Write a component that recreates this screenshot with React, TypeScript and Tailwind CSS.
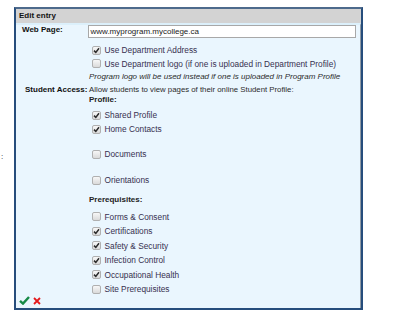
import React from 'react';

const profile = [
  { label: 'Shared Profile', checked: true, space: 'mt-[4px]' },
  { label: 'Home Contacts', checked: true, space: '' },
  { label: 'Documents', checked: false, space: 'mt-[11px]' },
  { label: 'Orientations', checked: false, space: 'mt-[12px]' },
];

const prerequisites = [
  { label: 'Forms & Consent', checked: false },
  { label: 'Certifications', checked: true },
  { label: 'Safety & Security', checked: true },
  { label: 'Infection Control', checked: true },
  { label: 'Occupational Health', checked: true },
  { label: 'Site Prerequisites', checked: false },
];

function Box({ checked }: { checked: boolean }) {
  return (
    <span className="flex h-[9px] w-[9px] shrink-0 items-center justify-center rounded-[2px] border border-[#b0b0b0] bg-linear-to-b from-[#f7f7f7] to-[#dadada]">
      {checked && (
        <svg width="7" height="7" viewBox="0 0 7 7">
          <path d="M1 3.6 L2.8 5.4 L6 1.2" fill="none" stroke="#2a2a2a" strokeWidth="1.5" />
        </svg>
      )}
    </span>
  );
}

function Option({ label, checked, className = 'h-[14px]' }: { label: string; checked: boolean; className?: string }) {
  return (
    <div className={`flex items-center gap-[4px] pl-[2.5px] ${className}`}>
      <Box checked={checked} />
      <span className="text-[8.3px] leading-[10px] text-[#37304f]">{label}</span>
    </div>
  );
}

function App() {
  return (
    <div className="relative min-h-[323px] bg-white pt-[7px] font-['Liberation_Sans',Arial,sans-serif] text-[8px]">
      <span className="absolute left-[1px] top-[152px] leading-[10px] text-[#222]">:</span>
      <div className="ml-[14px] w-[349px] border-x-2 border-t-2 border-b-2 border-x-[#264d7c] border-t-[#4d6a8c] border-b-[#264d7c]">
        <div className="h-[14px] bg-[#d3d3d3] pl-[3px] font-bold leading-[14px] text-[#111]">Edit entry</div>
        <div className="border-r-[1.5px] border-t-2 border-r-[#8f9aa5] border-t-[#dcf0fb] bg-[#eaf6fe] pb-[3.5px]">
          <div className="flex">
            <div className="h-[13px] w-[72px] pl-[6px] font-bold leading-[10px] text-[#111]">Web Page:</div>
            <div className="flex h-[13px] w-[268px] items-center border border-[#a8a8a8] bg-white pl-[1.5px] text-[#222]">
              www.myprogram.mycollege.ca
            </div>
          </div>

          <div className="pl-[73px]">
            <Option label="Use Department Address" checked className="mt-[5px] h-[14px]" />
            <Option label="Use Department logo (if one is uploaded in Department Profile)" checked={false} className="h-[13px]" />
            <div className="flex h-[14px] items-center italic leading-[10px] text-[#2b2b2b]">
              Program logo will be used instead if one is uploaded in Program Profile
            </div>
          </div>

          <div className="flex">
            <div className="h-[12px] w-[73px] pl-[9px] font-bold leading-[12px] text-[#111]">Student Access:</div>
            <div className="flex flex-col">
              <div className="h-[12px] text-[7.8px] leading-[12px] text-[#2b2b2b]">
                Allow students to view pages of their online Student Profile:
              </div>
              <div className="h-[8px] font-bold leading-[8px] text-[#222]">Profile:</div>
              {profile.map((item) => (
                <Option key={item.label} label={item.label} checked={item.checked} className={`h-[14px] ${item.space}`} />
              ))}
              <div className="mt-[8px] h-[14.5px] font-bold leading-[10px] text-[#222]">Prerequisites:</div>
              {prerequisites.map((item) => (
                <Option key={item.label} label={item.label} checked={item.checked} className="h-[14.5px]" />
              ))}
            </div>
          </div>

          <div className="flex h-[8px] items-center gap-[3px] pl-[3px]">
            <svg width="11" height="9" viewBox="0 0 11 9">
              <path d="M1 4.8 L4 7.6 L10 1" fill="none" stroke="#168a46" strokeWidth="2.4" />
            </svg>
            <svg width="8" height="8" viewBox="0 0 8 8">
              <path d="M1 1 L7 7 M7 1 L1 7" fill="none" stroke="#e3191c" strokeWidth="1.8" />
            </svg>
          </div>
        </div>
      </div>
    </div>
  );
}

export default App;
